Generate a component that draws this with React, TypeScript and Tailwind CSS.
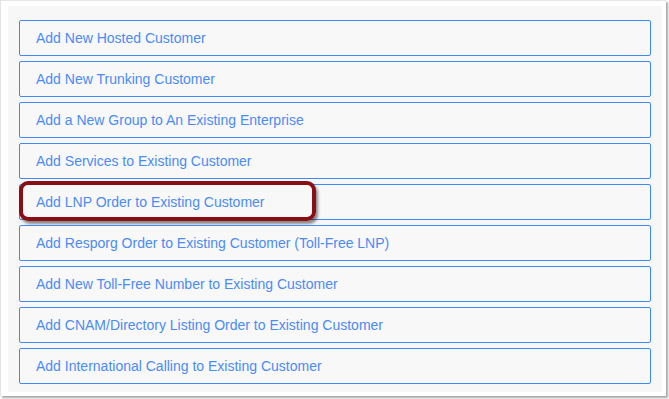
const items = [
  "Add New Hosted Customer",
  "Add New Trunking Customer",
  "Add a New Group to An Existing Enterprise",
  "Add Services to Existing Customer",
  "Add LNP Order to Existing Customer",
  "Add Resporg Order to Existing Customer (Toll-Free LNP)",
  "Add New Toll-Free Number to Existing Customer",
  "Add CNAM/Directory Listing Order to Existing Customer",
  "Add International Calling to Existing Customer",
];

export default function App() {
  return (
    <div className="w-[669px] h-[399px] bg-white font-['Liberation_Sans',Arial,sans-serif]">
      <div className="w-[666px] h-[396px] bg-white border-l border-t border-[#e4e4e4] shadow-[2px_2px_2px_rgba(0,0,0,0.35)] pl-[7px] pt-[5px]">
        <div className="w-[654px] h-[386px] bg-[#f7f7f7] pl-[11px] pt-[14px]">
          <ul className="w-[632px] flex flex-col gap-[5px]">
            {items.map((label, i) => (
              <li key={label} className="relative">
                <a
                  href="#"
                  className="flex items-center h-[36px] pl-[16px] border border-[#3d8afc] rounded-[2px] bg-[#f8f8f8] text-[14px] text-[#4a8bf5]"
                >
                  {label}
                </a>
                {i === 4 && (
                  <div className="absolute left-0 top-[-3px] w-[297px] h-[40px] border-[4px] border-[#8a0f14] rounded-[9px] shadow-[2px_3px_3px_rgba(0,0,0,0.45)] pointer-events-none" />
                )}
              </li>
            ))}
          </ul>
        </div>
      </div>
    </div>
  );
}
